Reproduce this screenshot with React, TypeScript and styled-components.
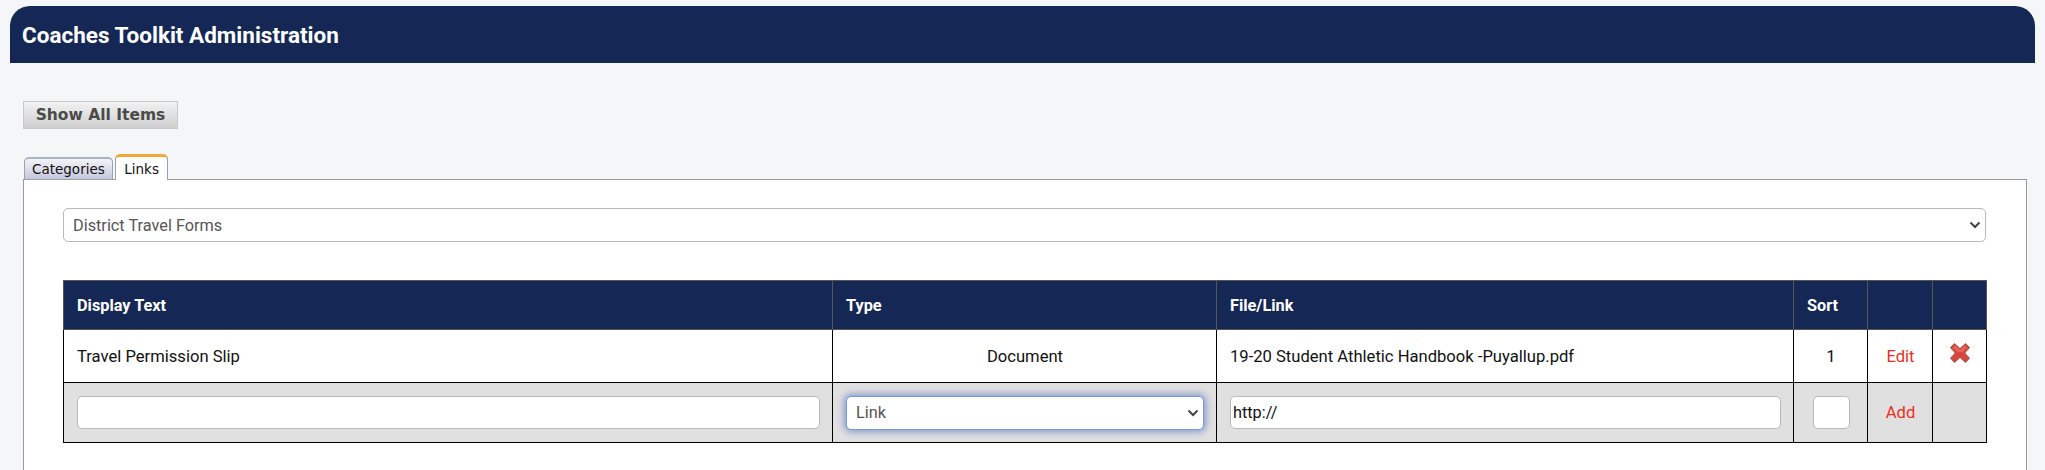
import { createGlobalStyle, styled } from "styled-components";

const navy = "#152855";
const chevron =
  "url(\"data:image/svg+xml;utf8,<svg xmlns='http://www.w3.org/2000/svg' width='12' height='8' viewBox='0 0 12 8'><path d='M1.5 1.5 6 6l4.5-4.5' fill='none' stroke='%23444' stroke-width='2'/></svg>\")";

const GlobalStyle = createGlobalStyle`
  html, body {
    margin: 0;
    height: 470px;
    overflow: hidden;
    background: #f5f6f8;
    font-family: Roboto, "Liberation Sans", sans-serif;
  }
`;

const Page = styled.div`
  padding: 6px 10px 0;
`;

const Banner = styled.h1`
  margin: 0;
  height: 57px;
  padding: 0 12px;
  display: flex;
  align-items: center;
  background: ${navy};
  border-radius: 20px 20px 0 0;
  color: #fff;
  font-size: 22.5px;
  font-weight: 700;
`;

const Content = styled.div`
  padding: 38px 8px 0 13px;
`;

const ShowAllButton = styled.button`
  display: block;
  width: 155px;
  height: 28px;
  padding: 0;
  border: 1px solid #c8c8c8;
  background: linear-gradient(#f2f2f2, #cfcfcf);
  color: #4a4a4a;
  font-family: "DejaVu Sans", sans-serif;
  font-size: 15.5px;
  font-weight: 700;
`;

const TabBar = styled.div`
  display: flex;
  align-items: flex-end;
  gap: 2px;
  margin-top: 25px;
  padding-left: 1px;
  position: relative;
  z-index: 1;
  margin-bottom: -1px;
`;

const Tab = styled.div<{ $active?: boolean }>`
  box-sizing: border-box;
  height: ${(p) => (p.$active ? "26px" : "23px")};
  padding: 0 ${(p) => (p.$active ? "8.5px" : "7px")};
  display: flex;
  align-items: center;
  border: 1px solid #9aa3ad;
  border-top: ${(p) => (p.$active ? "3px solid #f0a935" : "2px solid #a9b4c0")};
  border-bottom: ${(p) => (p.$active ? "none" : "1px solid #9aa3ad")};
  border-radius: 5px 5px 0 0;
  background: ${(p) => (p.$active ? "#fff" : "linear-gradient(#f3f3f8, #c6c7dc)")};
  color: #111;
  font-family: "DejaVu Sans", sans-serif;
  font-size: 13.5px;
`;

const Panel = styled.div`
  box-sizing: border-box;
  height: 292px;
  padding: 28px 40px 0 39px;
  background: #fff;
  border: 1px solid #9a9a9a;
`;

const FieldStyles = `
  box-sizing: border-box;
  border: 1px solid #b9b9b9;
  border-radius: 5px;
  background-color: #fff;
  font-family: Roboto, "Liberation Sans", sans-serif;
  font-size: 16.3px;
  outline: none;
`;

const Select = styled.select<{ $focused?: boolean }>`
  ${FieldStyles}
  display: block;
  width: 100%;
  height: 34px;
  padding: 0 9px;
  appearance: none;
  color: #555;
  background-image: ${chevron};
  background-repeat: no-repeat;
  background-position: right 4px center;
  ${(p) =>
    p.$focused &&
    `border-color: #6f9be0;
     box-shadow: 0 0 7px 2px #8498c8;`}
`;

const Input = styled.input<{ $width?: string }>`
  ${FieldStyles}
  display: block;
  width: ${(p) => p.$width || "100%"};
  height: 33px;
  padding: 0 1px 0 2px;
  color: #111;
`;

const Table = styled.table`
  width: 100%;
  margin-top: 38px;
  border-collapse: collapse;
  table-layout: fixed;
  font-size: 16.6px;
  color: #111;
`;

const HeadCell = styled.th`
  height: 48px;
  padding: 0 13px;
  background: ${navy};
  border: 1px solid #555;
  color: #fff;
  font-size: 16.3px;
  font-weight: 700;
  text-align: left;
`;

const Row = styled.tr<{ $form?: boolean }>`
  background: ${(p) => (p.$form ? "#e0e0e0" : "#fff")};
`;

const Cell = styled.td<{ $align?: string; $tall?: boolean }>`
  height: ${(p) => (p.$tall ? "59px" : "52px")};
  padding: 0 12px 0 13px;
  border: 1px solid #000;
  text-align: ${(p) => p.$align || "left"};
`;

const ActionLink = styled.a`
  color: #ee2c1c;
  cursor: pointer;
`;

const DeleteIcon = styled.svg`
  display: block;
  margin: -6px auto 0;
`;

function DeleteMark() {
  return (
    <DeleteIcon width="22" height="22" viewBox="0 0 22 22" aria-label="Delete">
      <path
        d="M5.5 1.5 11 6.5l5.5-5 4 4.2L15.7 11l4.8 5.2-4 4.3-5.5-5-5.5 5-4-4.3L6.3 11 1.5 5.7z"
        fill="#d5463c"
        stroke="#a8544e"
        strokeWidth="1"
        strokeLinejoin="round"
      />
      <path d="M6 3.5 11 8l5-4.5 2 2L13.5 10h-5L4 5.5z" fill="#e3645a" />
    </DeleteIcon>
  );
}

export default function App() {
  return (
    <Page>
      <GlobalStyle />
      <Banner>Coaches Toolkit Administration</Banner>
      <Content>
        <ShowAllButton>Show All Items</ShowAllButton>
        <TabBar>
          <Tab>Categories</Tab>
          <Tab $active>Links</Tab>
        </TabBar>
        <Panel>
          <Select defaultValue="district">
            <option value="district">District Travel Forms</option>
          </Select>
          <Table>
            <colgroup>
              <col style={{ width: 769 }} />
              <col style={{ width: 384 }} />
              <col style={{ width: 577 }} />
              <col style={{ width: 74 }} />
              <col style={{ width: 65 }} />
              <col style={{ width: 54 }} />
            </colgroup>
            <thead>
              <tr>
                <HeadCell>Display Text</HeadCell>
                <HeadCell>Type</HeadCell>
                <HeadCell>File/Link</HeadCell>
                <HeadCell>Sort</HeadCell>
                <HeadCell />
                <HeadCell />
              </tr>
            </thead>
            <tbody>
              <Row>
                <Cell>Travel Permission Slip</Cell>
                <Cell $align="center">Document</Cell>
                <Cell>19-20 Student Athletic Handbook -Puyallup.pdf</Cell>
                <Cell $align="center">1</Cell>
                <Cell $align="center">
                  <ActionLink>Edit</ActionLink>
                </Cell>
                <Cell $align="center">
                  <DeleteMark />
                </Cell>
              </Row>
              <Row $form>
                <Cell $tall>
                  <Input />
                </Cell>
                <Cell $tall>
                  <Select $focused defaultValue="link">
                    <option value="link">Link</option>
                    <option value="document">Document</option>
                  </Select>
                </Cell>
                <Cell $tall>
                  <Input defaultValue="http://" />
                </Cell>
                <Cell $tall $align="center">
                  <Input $width="37px" style={{ margin: "0 auto" }} />
                </Cell>
                <Cell $tall $align="center">
                  <ActionLink>Add</ActionLink>
                </Cell>
                <Cell $tall />
              </Row>
            </tbody>
          </Table>
        </Panel>
      </Content>
    </Page>
  );
}
